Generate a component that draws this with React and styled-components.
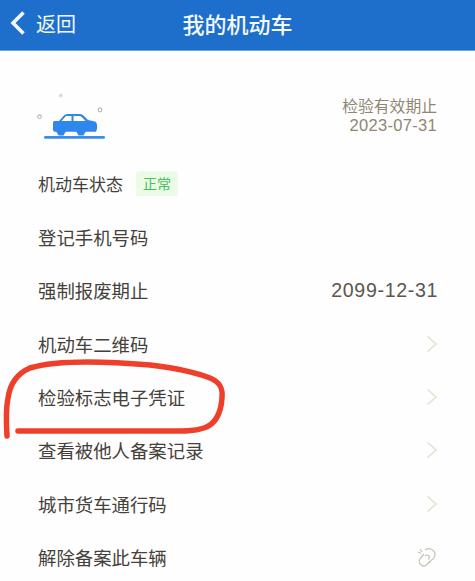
import React from "react";
import styled, { createGlobalStyle } from "styled-components";

const Global = createGlobalStyle`
  html, body { margin: 0; padding: 0; background: #fff; }
  body { font-family: "Noto Sans CJK SC", "Noto Sans", sans-serif; }
`;

const Page = styled.div`
  position: relative;
  width: 475px;
  height: 581px;
  overflow: hidden;
  background: #fefefe;
`;

const Header = styled.header`
  box-sizing: border-box;
  height: 51px;
  padding-bottom: 4px;
  background: #1d6fcb;
  border-bottom: 1px solid #6aa5de;
  display: grid;
  grid-template-columns: 1fr auto 1fr;
  align-items: center;
  color: #f4f8fc;
`;

const Back = styled.div`
  display: flex;
  align-items: center;
  gap: 10px;
  padding-left: 10px;
  font-size: 20px;
`;

const Title = styled.h1`
  margin: 0;
  font-size: 22px;
  font-weight: 500;
`;

const Summary = styled.section`
  box-sizing: border-box;
  height: 105.8px;
  display: flex;
  align-items: flex-start;
  justify-content: space-between;
  padding: 41px 38px 0 36px;
`;

const Validity = styled.div`
  margin-top: 4px;
  text-align: right;
  color: #8f8672;
  font-size: 15.8px;
  line-height: 19.5px;
`;

const DateLine = styled.div`
  font-family: "Liberation Sans", sans-serif;
  font-size: 16.5px;
  letter-spacing: 0.3px;
`;

const List = styled.div`
  display: flex;
  flex-direction: column;
`;

const Row = styled.div`
  height: 53.35px;
  display: flex;
  align-items: center;
  padding: 0 37px 0 38px;
  color: #45413a;
  font-size: 18.4px;
`;

const Label = styled.span`
  flex: 0 0 auto;
  font-size: ${(p) => (p.$small ? "17px" : "inherit")};
`;

const Badge = styled.span`
  margin-left: 13px;
  padding: 0 7px;
  height: 25px;
  display: inline-flex;
  align-items: center;
  background: #ecfbe6;
  border-radius: 3px;
  color: #48c060;
  font-size: 14px;
`;

const Trail = styled.span`
  margin-left: auto;
  display: flex;
  align-items: center;
`;

const Value = styled.span`
  font-family: "Liberation Sans", sans-serif;
  font-size: 19.6px;
  letter-spacing: 0.65px;
  color: #5c574c;
`;

const Scribble = styled.svg`
  position: absolute;
  left: 0;
  top: 355px;
  pointer-events: none;
`;

const Chevron = () => (
  <svg width="12" height="18" viewBox="0 0 12 18" fill="none">
    <path d="M1.5 1.5 L10 9 L1.5 16.5" stroke="#e6e2d2" strokeWidth="1.6" />
  </svg>
);

const BackIcon = () => (
  <svg width="16" height="24" viewBox="0 0 16 24" fill="none">
    <path d="M13.5 1.5 L3 12 L13.5 22.5" stroke="#f4f8fc" strokeWidth="3.6" />
  </svg>
);

const Unlink = () => (
  <svg width="22" height="22" viewBox="0 0 22 22" fill="none" stroke="#c8c6b8" strokeWidth="1.3">
    <path d="M9 4 a6.5 6.5 0 0 1 9.5 2 a6 6 0 0 1 -3 8 l-3 3" />
    <path d="M8 8 l-4 5 a4.5 4.5 0 0 0 6.5 6 l4 -4" />
    <path d="M9 10 a3 3 0 0 1 4.5 0.5 l-1 3" />
    <path d="M4 3 l2 3 M2 6 l3 1.5" />
  </svg>
);

const CarIllustration = () => (
  <svg width="76" height="56" viewBox="0 0 76 56">
    <circle cx="24.7" cy="3.5" r="2" fill="#dcdde0" />
    <circle cx="3.5" cy="24.7" r="1.8" fill="none" stroke="#b5bbc2" strokeWidth="1.2" />
    <circle cx="64" cy="18" r="1.8" fill="none" stroke="#b5bbc2" strokeWidth="1.2" />
    <path
      d="M17 38 L17 31 C17 29.5 18 29 19.5 29 L23 29 L28 23.5 C29 22.5 30.5 22 32 22 L43 22 C45 22 46.5 22.5 48 24 L52 28 L59 29.5 C61 30.5 61.5 33 61 37 L60 39.7 L18 39.7 Z"
      fill="#2f87ee"
    />
    <path d="M25.5 29 L30 24 L35.5 24 L35.5 29 Z M37.5 24 L43.5 24 C45 24 46.5 25.5 49.5 29 L37.5 29 Z" fill="#fefefe" />
    <path d="M20 39 H30 L27.5 43.5 H22.5 Z M40 39 H50 L47.5 43.5 H42.5 Z" fill="#2f87ee" />
    <rect x="8" y="44" width="61" height="2.8" rx="1.4" fill="#3a8cee" />
  </svg>
);

const rows = [
  { label: "登记手机号码" },
  { label: "强制报废期止", value: "2099-12-31" },
  { label: "机动车二维码", chevron: true },
  { label: "检验标志电子凭证", chevron: true },
  { label: "查看被他人备案记录", chevron: true },
  { label: "城市货车通行码", chevron: true },
  { label: "解除备案此车辆", unlink: true },
];

export default function App() {
  return (
    <Page>
      <Global />
      <Header>
        <Back>
          <BackIcon />
          <span>返回</span>
        </Back>
        <Title>我的机动车</Title>
      </Header>
      <Summary>
        <CarIllustration />
        <Validity>
          <div>检验有效期止</div>
          <DateLine>2023-07-31</DateLine>
        </Validity>
      </Summary>
      <List>
        <Row>
          <Label $small>机动车状态</Label>
          <Badge>正常</Badge>
        </Row>
        {rows.map((r) => (
          <Row key={r.label}>
            <Label>{r.label}</Label>
            {r.value && (
              <Trail>
                <Value>{r.value}</Value>
              </Trail>
            )}
            {r.chevron && (
              <Trail>
                <Chevron />
              </Trail>
            )}
            {r.unlink && (
              <Trail>
                <Unlink />
              </Trail>
            )}
          </Row>
        ))}
      </List>
      <Scribble width="240" height="90" viewBox="0 355 240 90" fill="none">
        <path
          d="M7 436 C6 420 6 408 8 398 C10 384 16 374 30 368 C50 362 90 360 150 365 C175 368 195 372 210 378 C220 382 223 388 222 398 C221 412 216 424 204 428 C192 432 180 431 150 431 L18 431"
          stroke="#ef3f2b"
          strokeWidth="5.5"
          strokeLinecap="round"
          strokeLinejoin="round"
        />
      </Scribble>
    </Page>
  );
}
